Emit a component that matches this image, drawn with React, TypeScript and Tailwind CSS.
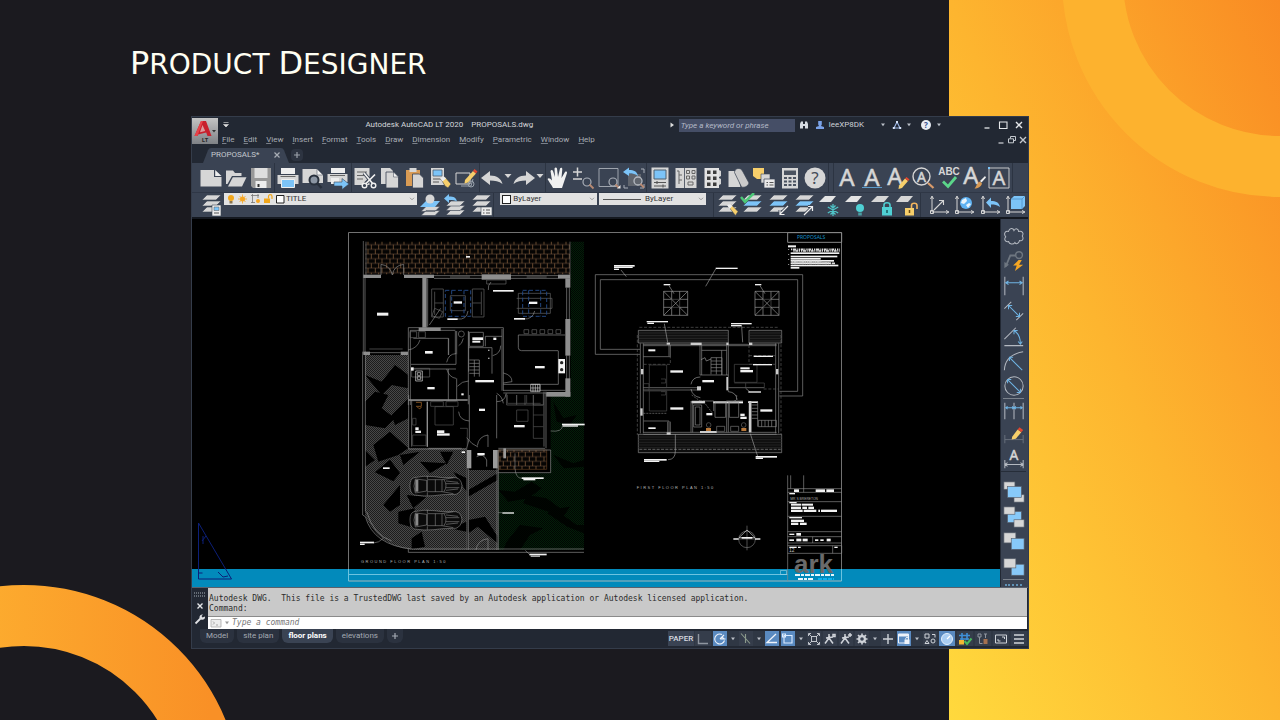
import React from "react";

type Box = [number, number, number, number];

const L = "#d6d6d6";
const B = "#7cc4f8";
const Y = "#f7cf6b";
const D = "#3a4353";

/* ---------- small helpers ---------- */

function Svg({ children, size = "size-6", box = "0 0 24 24" }: { children: React.ReactNode; size?: string; box?: string }) {
  return (
    <svg viewBox={box} className={`${size} shrink-0 overflow-visible`} fill="none" aria-hidden="true">
      {children}
    </svg>
  );
}

function Caret({ className = "text-[#b9bec6]" }: { className?: string }) {
  return (
    <svg viewBox="0 0 6 4" className={`h-1 w-1.5 shrink-0 ${className}`} aria-hidden="true">
      <path d="M1 .5h4L3 3.2z" fill="currentColor" />
    </svg>
  );
}

function Chevron() {
  return (
    <svg viewBox="0 0 6 4" className="mr-0.5 h-1 w-1.5 shrink-0" fill="none" aria-hidden="true">
      <path d="M1 .8l2 2 2-2" stroke="#888" strokeWidth=".8" />
    </svg>
  );
}

function Letter({ x = 12, y = 20, s = 24, children = "A" }: { x?: number; y?: number; s?: number; children?: string }) {
  return (
    <text x={x} y={y} fontSize={s} textAnchor="middle" fill={L} stroke={L} strokeWidth=".5" fontFamily="'Noto Sans', sans-serif">
      {children}
    </text>
  );
}

const Stack = ({ mid = L }: { mid?: string }) => (
  <>
    <path d="M8 14h14l-5 5H3z" fill={L} stroke={D} strokeWidth=".6" />
    <path d="M8 8h14l-5 5H3z" fill={mid} stroke={D} strokeWidth=".6" />
    <path d="M8 2h14l-5 5H3z" fill={L} stroke={D} strokeWidth=".6" />
  </>
);

const Axes = () => (
  <path d="M5 4v15h16M3.500 6L5 3l1.500 3M19 17.500l3 1.500-3 1.500M3.500 17.500h3v3h-3z" stroke={L} strokeWidth="1" />
);

const Pencil = () => (
  <>
    <path d="M13 19.500l6-7 3 2.500-6 7-3.500 1z" fill={Y} />
    <path d="M19 12.500l1.500-1.500 3 2.500L22 15z" fill="#e0472f" />
  </>
);

/* ---------- toolbar icons ---------- */

const icons: Record<string, React.ReactNode> = {
  New: (
    <>
      <path d="M1.500 4H15v7h7.500v9.500h-21z" fill={L} />
      <path d="M16.200 4l6.300 6h-6.300z" fill="#eee" />
    </>
  ),
  Open: (
    <>
      <path d="M2 4.500h7l2 2.500h6.500v3H8L3.500 18H2z" fill={L} />
      <path d="M8.800 11.200H22.500l-4.500 9.300H4z" fill={L} />
    </>
  ),
  Save: (
    <>
      <path d="M2 2h20v20H4l-2-2z" fill="#989898" />
      <path d="M5.500 2h13v10h-13z" fill="#dedede" />
      <path d="M6.500 15h11v7h-11z" fill="#ededed" />
      <path d="M8.500 18h2v3h-2z" fill="#333" />
    </>
  ),
  Print: (
    <>
      <path d="M5 2h14v6H5z" fill="#eee" />
      <path d="M1.500 9h21v9h-21z" fill={L} />
      <path d="M4.500 10.500h15" stroke="#666" />
      <path d="M5.500 13.500h13v8h-13z" fill={B} stroke="#eee" />
    </>
  ),
  "Print preview": (
    <>
      <path d="M1.500 3H16l6 6v8H1.500z" fill={L} />
      <path d="M16 3l6 6h-6z" fill="#f4f4f4" stroke={D} strokeWidth=".5" />
      <circle cx="13" cy="14" r="4.500" fill="#8b95a3" stroke="#28303c" strokeWidth="2" />
      <path d="M16 17l4.500 5" stroke="#28303c" strokeWidth="2.600" />
    </>
  ),
  Publish: (
    <>
      <path d="M5 2h14v5H5z" fill="#eee" />
      <path d="M1.500 8h20v8h-20z" fill={L} />
      <path d="M4 9.500h15" stroke="#666" />
      <path d="M5 12h8v6H5z" fill="#eee" />
      <path d="M8 16h8v-3.500l7 5.500-7 5.500V20H8z" fill={B} stroke={D} strokeWidth=".6" />
    </>
  ),
  Cut: (
    <>
      <path d="M1.500 2h15v17h-15z" fill={L} />
      <path d="M4 6h10M4 9.500h7M4 13h6" stroke="#666" strokeWidth="1.200" />
      <path d="M11 7l9 11M21 9l-9 9" stroke={D} strokeWidth="3.500" />
      <path d="M11 7l9 11M22 8.500l-10 10" stroke="#f0f0f0" strokeWidth="1.700" />
      <circle cx="11.500" cy="19.500" r="2.300" fill={D} stroke="#f0f0f0" strokeWidth="1.400" />
      <circle cx="20.500" cy="19.500" r="2.300" fill={D} stroke="#f0f0f0" strokeWidth="1.400" />
    </>
  ),
  Copy: (
    <>
      <path d="M3 2h9l3 3v13H3z" fill={L} />
      <path d="M8 6h7.500l5 5v11H8z" fill={L} stroke={D} strokeWidth=".8" />
      <path d="M15.500 6l5 5h-5z" fill="#f0f0f0" stroke={D} strokeWidth=".5" />
    </>
  ),
  Paste: (
    <>
      <path d="M3 4h14v16H3z" fill="#d99b54" />
      <path d="M6.500 2h7v4h-7z" fill={L} />
      <path d="M9.500 8h7l4 4v10h-11z" fill={L} stroke={D} strokeWidth=".8" />
    </>
  ),
  "Match properties": (
    <>
      <path d="M2 2h13v17H2z" fill={L} />
      <path d="M4 4h9v6H4z" fill={B} stroke="#51606f" strokeWidth=".8" />
      <path d="M4 13h8M4 16h6" stroke="#555" />
      <path d="M12 13l4-2 6 7-3 4-3-2z" fill={Y} stroke={D} strokeWidth=".6" />
      <path d="M11 12l4-1.500 2 2-3.500 3z" fill="#eee" />
    </>
  ),
  "Block editor": (
    <>
      <path d="M2 7h14v11H2z" stroke={L} />
      <path d="M7 20h10l2-7" stroke="#9aa3ad" />
      <circle cx="17" cy="18" r="3" stroke="#9aa3ad" />
      <path d="M11 14l8-9 3 2.500-8 9-3.500 1z" fill={Y} />
      <path d="M19 5l1.500-2 3 2.500L22 7.500z" fill="#e0472f" />
    </>
  ),
  Undo: <path d="M1 12l9-7v4.500c7 0 11 3 12.500 8.500C19 15 15 14.500 10 14.500V19z" fill={L} />,
  Redo: <path d="M23 12l-9-7v4.500C7 9.500 3 12.500 1.500 18 5 15 9 14.500 14 14.500V19z" fill={L} />,
  Pan: (
    <path
      d="M7 22c-2-4-4-6-5.500-9 1-1.500 2.500-1 4.500 1.500L4.500 5C5 3.500 6.500 3.500 7 5l2 6-.5-8.500c.5-1.500 2-1.500 2.500 0L12 11l2-8.500c.7-1.300 2.300-.9 2.300.5L15.500 12l3.500-6c1-1 2.300-.3 2 1L18 16l-2 6z"
      fill="#f1f1f1"
    />
  ),
  "Zoom realtime": (
    <>
      <path d="M2 6h9M6.500 1.500v9M2 13h9" stroke={L} strokeWidth="1.500" />
      <circle cx="16" cy="16" r="4" stroke="#a9afb8" strokeWidth="1.200" />
      <path d="M18.500 18.500l4 4" stroke="#b88972" strokeWidth="1.800" />
    </>
  ),
  "Zoom window": (
    <>
      <path d="M2 2.500h19v18H2z" stroke="#a9afb8" strokeWidth=".9" />
      <circle cx="16" cy="16" r="4" fill={D} stroke="#a9afb8" strokeWidth="1.200" />
      <path d="M18.500 18.500l3 3" stroke="#b88972" strokeWidth="1.800" />
      <path d="M20 22.500h3.500V19z" fill="#eee" />
    </>
  ),
  "Zoom previous": (
    <>
      <path d="M6 8h13v12H6z" fill="#60656d" />
      <path d="M2 19v3h4M19 3h3v4M22 18v4h-4" stroke="#a9afb8" />
      <path d="M1 6l6-4.500V4c5 0 8 1.500 9 6-2.500-2-5-2.500-9-2.500V10z" fill={B} />
      <circle cx="16" cy="15" r="4" stroke="#b5bac1" strokeWidth="1.300" />
      <path d="M18.500 18l3.500 3.500" stroke="#b88972" strokeWidth="1.800" />
    </>
  ),
  Properties: (
    <>
      <path d="M3.500 1.500h17v21h-17z" fill={L} />
      <path d="M6 4h12v9H6z" fill={B} stroke="#51606f" />
      <path d="M6 16.500h12M6 20h12M9 15v3M15 18.500v3" stroke="#555" strokeWidth="1.100" />
    </>
  ),
  DesignCenter: (
    <>
      <path d="M1.500 2h21v20h-21z" fill={L} />
      <path d="M10.500 2v20" stroke={D} strokeWidth=".8" />
      <path d="M3 5h2v13M5 9h3M5 14h3M12.500 4.500h3v3h-3zM18 4.500h3v3h-3zM12.500 10h3v3h-3zM18 10h3v3h-3zM14 16h5v3h-5z" stroke="#666" />
    </>
  ),
  "Tool palettes": (
    <>
      <path d="M4.500 2H19v20H4.500z" fill="#e3e3e3" />
      <path d="M19 4l2 1v5l-2 1zM19 12l2 1v5l-2 1z" fill={L} />
      <path d="M7 4.500h3.500V8H7zM13 4.500h3.500V8H13zM7 10.500h3.500V14H7zM13 10.500h3.500V14H13zM7 16.500h3.500V20H7zM13 16.500h3.500V20H13z" fill="#3c3c3c" />
    </>
  ),
  "Sheet set": (
    <>
      <path d="M2.500 5h8l4 16h-12z" fill={L} />
      <path d="M8.500 6.500c0-4.500 6-5.500 8-1.500l6.500 12c-1 3-4 5-7.500 4z" fill="#cbcbcb" stroke={D} strokeWidth=".7" />
    </>
  ),
  Markup: (
    <>
      <path d="M1 2h11v11H5l-4-3z" fill={Y} />
      <path d="M9 8h9v9H9z" fill={L} stroke={D} strokeWidth=".6" />
      <path d="M12 13h11v9H12z" fill="#e9e9e9" stroke={D} strokeWidth=".7" />
      <path d="M14.500 16.500h1.500M17.500 16.500h4M14.500 19h1.500M17.500 19h4" stroke="#555" />
    </>
  ),
  Calculator: (
    <>
      <path d="M4 2h16v20.500H4z" fill={L} />
      <path d="M6 4.500h12V9H6z" fill="#4a525f" />
      <path d="M6 12h3M10.500 12h3M15 12h3M6 15.500h3M10.500 15.500h3M15 15.500h3M6 19h3M10.500 19h3M15 19h3" stroke="#4a525f" strokeWidth="2" />
    </>
  ),
  Help: (
    <>
      <circle cx="12" cy="12" r="10.500" fill={L} />
      <text x="12" y="18" fontSize="17" textAnchor="middle" fill="#444c58" fontFamily="'Noto Sans', sans-serif">
        ?
      </text>
    </>
  ),
  "Multiline text": <Letter />,
  "Single line text": (
    <>
      <Letter />
      <path d="M2 21.500h20" stroke="#5c9bc9" />
    </>
  ),
  "Edit text": (
    <>
      <Letter x={9} y={19} />
      <Pencil />
    </>
  ),
  "Find text": (
    <>
      <circle cx="10.500" cy="10.500" r="8.500" stroke={L} strokeWidth="1.400" />
      <Letter x={10.5} y={15.5} s={14} />
      <path d="M17 17l5.500 5" stroke="#d99b6b" strokeWidth="2.200" />
    </>
  ),
  Spelling: (
    <>
      <text x="12" y="9" fontSize="10" fontWeight="700" textAnchor="middle" fill={L} fontFamily="'Liberation Sans', sans-serif">
        ABC
      </text>
      <path d="M6 15.500l5 5L19 11" stroke="#5bd68a" strokeWidth="2.800" />
    </>
  ),
  "Text style": (
    <>
      <Letter x={9} y={18} />
      <path d="M23 10l-5 5 1.500 1.500L24 11.500z" fill="#eee" />
      <path d="M18 15.500l2 2c-1 3.500-4 5-7.500 5 2-1.500 2-5.500 5.500-7z" fill="#d99b54" />
    </>
  ),
  "Text frame": (
    <>
      <path d="M2 2h20v20H2z" stroke={L} strokeWidth=".9" />
      <Letter y={19} s={20} />
      <path d="M1 1h2v2H1z" fill={B} />
    </>
  ),
  "Layer properties": (
    <>
      <Stack />
      <path d="M13 12h9v11h-9z" fill="#ececec" stroke={D} strokeWidth=".6" />
      <path d="M15 14h5v3.500h-5z" fill={B} stroke="#555" strokeWidth=".5" />
      <path d="M15 20h5" stroke="#555" />
    </>
  ),
  "Make current": (
    <>
      <path d="M8 17.500h14l-5 5H3zM8 13.500h14l-5 5H3z" fill={L} stroke={D} strokeWidth=".6" />
      <path d="M8 8h14l-5 6H2z" fill={B} />
      <circle cx="12" cy="6" r="4.500" fill={L} />
    </>
  ),
  "Layer previous": (
    <>
      <path d="M8 17h14l-5 5H3z" fill={L} stroke={D} strokeWidth=".6" />
      <path d="M8 12.500h14l-5 5H3z" fill={L} stroke={D} strokeWidth=".6" />
      <path d="M8 8h14l-5 5H3z" fill={L} stroke={D} strokeWidth=".6" />
      <path d="M1 5.500l5-4.500v2.500c5 0 7 1 8 5-2-1.500-4-1.500-8-1.500v3z" fill={B} />
    </>
  ),
  "Layer states": (
    <>
      <Stack />
      <path d="M12 14h11v8.500H12z" fill="#ececec" stroke={D} strokeWidth=".6" />
      <path d="M14 17h1.500M17 17h4M14 20h1.500M17 20h4" stroke="#555" />
    </>
  ),
  "Layer match": (
    <>
      <Stack />
      <path d="M13 13l3-1.500 7 7-2.500 4z" fill={Y} stroke={D} strokeWidth=".5" />
      <path d="M12 12l3.500-1 2 2-3 3z" fill="#eee" />
    </>
  ),
  "Change to current": (
    <>
      <Stack mid={B} />
      <path d="M1 4l4 5L14 0" stroke="#4cc877" strokeWidth="2.500" />
    </>
  ),
  "Copy to layer": (
    <>
      <Stack mid={B} />
      <path d="M22 13l-8 8M14 17v4.500h4.500" stroke={D} strokeWidth="3" />
      <path d="M22 13l-8 8M14 17v4.500h4.500" stroke="#eee" strokeWidth="1.200" />
    </>
  ),
  "Layer walk": (
    <>
      <Stack mid={B} />
      <path d="M12 22l8-8M16 13.500h4.500V18" stroke={D} strokeWidth="3" />
      <path d="M12 22l8-8M16 13.500h4.500V18" stroke="#eee" strokeWidth="1.200" />
    </>
  ),
  "Layer freeze": (
    <>
      <path d="M7 3h11l-5 6H1z" fill="#e4e4e4" />
      <path d="M15 11v12M9.800 14l10.400 6M9.800 20l10.400-6M12.500 12.500L15 15l2.500-2.500M12.500 21.500L15 19l2.500 2.500" stroke="#4fc3c7" strokeWidth="1.300" />
    </>
  ),
  "Layer off": (
    <>
      <path d="M7 3h11l-5 6H1z" fill="#e4e4e4" />
      <circle cx="16" cy="15" r="4" fill="#4fd0d4" />
      <path d="M14.200 19.500h3.600v3h-3.600z" fill="#4a9da3" />
    </>
  ),
  "Layer lock": (
    <>
      <path d="M7 3h12l-5 6H1z" fill={L} />
      <path d="M12 14h10v8.500H12z" fill="#4fd0d4" />
      <path d="M14 14v-2c0-3 6-3 6 0v2" stroke="#4fd0d4" strokeWidth="1.600" />
      <path d="M17 17v3" stroke="#175a5e" strokeWidth="1.500" />
    </>
  ),
  "Layer unlock": (
    <>
      <path d="M6 3h12l-5 6H1z" fill={L} />
      <path d="M10 15h9v7.500h-9z" fill={Y} />
      <path d="M16.500 15v-2.500c0-3 5.500-3 5.500 0V16" stroke="#f4b55e" strokeWidth="1.600" />
      <path d="M14.500 17v3" stroke="#6b4a12" strokeWidth="1.500" />
    </>
  ),
  "UCS origin": (
    <>
      <Axes />
      <path d="M7 17l9-9M12 7.500h4.500V12" stroke={L} strokeWidth="1.100" />
    </>
  ),
  "UCS world": (
    <>
      <Axes />
      <circle cx="14" cy="10" r="6" fill="#5fb2f2" />
      <path d="M10 7l4-2 1 3-3 3-3-1zM14 12l3-2 2 1-3 4z" fill="#e9f4fb" />
    </>
  ),
  "UCS previous": (
    <>
      <Axes />
      <path d="M8 9.500l5-5V8c5 0 8 1.500 9 6-3-2-5-2.500-9-2.500V15z" fill={B} />
    </>
  ),
  "UCS face": (
    <>
      <Axes />
      <path d="M8 6l3-3h11v10l-3 3H8z" fill={B} />
      <path d="M8 6h11v10M19 6l3-3" stroke="#4c8fc4" strokeWidth=".8" />
    </>
  ),
};

function ToolGroup({ names, divider = true }: { names: string[]; divider?: boolean }) {
  return (
    <div className={`flex min-w-0 items-center ${divider ? "border-r border-[#2c3442]" : ""}`}>
      {names.map((n) => (
        <button key={n} type="button" aria-label={n} className="flex min-w-0 flex-1 justify-center">
          <Svg>{icons[n]}</Svg>
        </button>
      ))}
    </div>
  );
}

/* ---------- title and menus ---------- */

const menus = ["File", "Edit", "View", "Insert", "Format", "Tools", "Draw", "Dimension", "Modify", "Parametric", "Window", "Help"];

function WindowButtons({ small = false }: { small?: boolean }) {
  const c = small ? "#c4c8ce" : "#e4e6e9";
  return (
    <div className={`flex shrink-0 items-center ${small ? "gap-px" : "gap-1.5"}`}>
      <button type="button" aria-label="Minimize">
        <Svg size="size-2.5" box="0 0 10 10">
          <path d="M2.500 8h5" stroke={c} strokeWidth="1.300" />
        </Svg>
      </button>
      <button type="button" aria-label="Restore">
        <Svg size="size-2.5" box="0 0 10 10">
          {small ? <path d="M3.500 3.500v-2h5v4h-2M1.500 3.800h5v4h-5z" stroke={c} /> : <path d="M1.500 2h7.500v6.500H1.500z" stroke={c} strokeWidth="1.100" />}
        </Svg>
      </button>
      <button type="button" aria-label="Close">
        <Svg size="size-2.5" box="0 0 10 10">
          <path d="M2 2l6 6M8 2l-6 6" stroke={c} strokeWidth="1.400" />
        </Svg>
      </button>
    </div>
  );
}

function TitleArea() {
  return (
    <div className="flex bg-[#222833]">
      <button
        type="button"
        aria-label="Application menu"
        className="my-px flex h-[26px] w-[26px] shrink-0 items-center justify-center bg-linear-to-b from-[#c4c4c4] to-[#7f8286]"
      >
        <Svg size="size-6">
          <path d="M1.500 17L8 2h5l5.500 15h-4l-1.300-3.500L5 15.500 4.500 17z" fill="#c8202c" />
          <path d="M9.500 6l2.700 6-5.200 1.200z" fill="#dc9a9c" />
          <path d="M1.500 17L8 2h2L5 15.500 4.500 17z" fill="#e8434a" />
          <path d="M19 11h4l-2 2.500z" fill="#333" />
          <text x="12" y="23" fontSize="6" fontWeight="700" textAnchor="middle" fill="#2a2a2a" fontFamily="'Noto Sans', sans-serif">
            LT
          </text>
        </Svg>
      </button>
      <div className="min-w-0 flex-1">
        <div className="flex h-4 items-center pr-1 pl-1">
          <button type="button" aria-label="Quick access">
            <Svg size="size-2" box="0 0 8 8">
              <path d="M1.500 1.500h5M1.500 3.500h5L4 6z" fill="#ddd" stroke="#ddd" strokeWidth=".6" />
            </Svg>
          </button>
          <h2 className="flex flex-1 justify-center gap-2 text-[8px] leading-4 whitespace-pre text-[#d3d6da]">
            <span>Autodesk AutoCAD LT 2020</span>
            <span>PROPOSALS.dwg</span>
          </h2>
          <span className="mr-1 text-white">
            <Svg size="size-1.5" box="0 0 6 6">
              <path d="M1.500.5v5L5 3z" fill="#ddd" />
            </Svg>
          </span>
          <input
            type="search"
            aria-label="Search help"
            placeholder="Type a keyword or phrase"
            className="h-[13px] w-[116px] bg-[#454e66] px-0.5 text-[8px] leading-3 text-white italic placeholder:text-[#b3b9c6]"
          />
          <button type="button" aria-label="Search" className="ml-1">
            <Svg size="size-2.5" box="0 0 10 10">
              <path d="M1 8.500V4l1-2.500h2V4h2V1.500h2L9 4v4.500H6V6H4v2.500z" fill="#d6dbe2" />
            </Svg>
          </button>
          <button type="button" className="ml-1.5 flex items-center gap-1 text-[8px] text-[#cdd1d7]">
            <Svg size="size-2.5" box="0 0 10 10">
              <path d="M3.200 1h3.600v3.500L6 6l3 1v2H1V7l3-1-.8-1.500z" fill="#7aa2e8" />
            </Svg>
            leeXP8DK
          </button>
          <button type="button" aria-label="Account" className="ml-4">
            <Caret />
          </button>
          <button type="button" aria-label="App store" className="ml-1.5 flex items-center gap-1">
            <Svg size="size-2.5" box="0 0 10 10">
              <path d="M5 2L2 8h6z" stroke="#9db7e6" strokeWidth="1.100" />
              <path d="M4 1h2v2H4zM.8 7h2v2h-2zM7.200 7h2v2h-2z" fill="#d6e2f8" />
            </Svg>
            <Caret />
          </button>
          <button type="button" aria-label="Help menu" className="ml-2 flex items-center gap-1">
            <Svg size="size-3" box="0 0 12 12">
              <circle cx="6" cy="6" r="5" fill="#e9edf5" />
              <text x="6" y="9" fontSize="8" fontWeight="700" textAnchor="middle" fill="#33508f" fontFamily="'Noto Sans', sans-serif">
                ?
              </text>
            </Svg>
            <Caret />
          </button>
          <div className="ml-10">
            <WindowButtons />
          </div>
        </div>
        <div className="flex h-3.5 items-center pl-1">
          <nav aria-label="Menu bar" className="flex flex-1 gap-[9px] text-[8px] leading-3 text-[#a9aeb6]">
            {menus.map((m) => (
              <button key={m} type="button">
                <span className="underline decoration-[#7a808a]">{m[0]}</span>
                {m.slice(1)}
              </button>
            ))}
          </nav>
          <WindowButtons small />
        </div>
      </div>
    </div>
  );
}

function FileTabs() {
  return (
    <div className="flex h-4 items-end bg-[#222833] pl-[11px] text-[8px] text-[#c3c8ce]">
      <div className="relative flex h-4 w-[86px] items-center justify-between pr-2 pl-2">
        <svg viewBox="0 0 86 15" preserveAspectRatio="none" className="absolute inset-0 size-full" aria-hidden="true">
          <path d="M0 15L5 3q1-2 3-2h70q2 0 3 2l5 12z" fill={D} />
        </svg>
        <span className="relative">PROPOSALS*</span>
        <button type="button" aria-label="Close drawing" className="relative">
          <Svg size="size-2" box="0 0 8 8">
            <path d="M1.500 1.500l5 5M6.500 1.500l-5 5" stroke="#a9aeb6" strokeWidth="1.200" />
          </Svg>
        </button>
      </div>
      <button type="button" aria-label="New drawing" className="mb-0.5 ml-0.5 rounded-sm bg-[#2d3441] px-0.5 py-0.5">
        <Svg size="size-2" box="0 0 8 8">
          <path d="M4 1v6M1 4h6" stroke="#9ba1aa" strokeWidth="1.200" />
        </Svg>
      </button>
    </div>
  );
}

/* ---------- ribbons ---------- */

function MainToolbar() {
  return (
    <div className="grid h-[29px] grid-cols-[77fr_77fr_128fr_66fr_102fr_182fr_5fr_179fr_15fr] bg-[#3a4353] pl-1.5" role="toolbar" aria-label="Standard">
      <ToolGroup names={["New", "Open", "Save"]} />
      <ToolGroup names={["Print", "Print preview", "Publish"]} />
      <ToolGroup names={["Cut", "Copy", "Paste", "Match properties", "Block editor"]} />
      <div className="flex items-center border-r border-[#2c3442]">
        {["Undo", "Redo"].map((n) => (
          <div key={n} className="flex flex-1 items-center">
            <button type="button" aria-label={n}>
              <Svg>{icons[n]}</Svg>
            </button>
            <button type="button" aria-label={`${n} list`} className="-mt-1">
              <Svg size="size-2" box="0 0 8 8">
                <path d="M.5 2h7L4 6z" fill={L} />
              </Svg>
            </button>
          </div>
        ))}
      </div>
      <ToolGroup names={["Pan", "Zoom realtime", "Zoom window", "Zoom previous"]} />
      <ToolGroup names={["Properties", "DesignCenter", "Tool palettes", "Sheet set", "Markup", "Calculator", "Help"]} />
      <span className="border-r border-[#2c3442]" />
      <ToolGroup names={["Multiline text", "Single line text", "Edit text", "Find text", "Spelling", "Text style", "Text frame"]} />
    </div>
  );
}

function LayerToolbar() {
  const pick = "h-3 min-w-0 flex-1 appearance-none bg-transparent text-[8px] leading-3 text-[#333]";
  const combo = "flex h-3 min-w-0 items-center self-start bg-[#e2e2e2]";
  return (
    <div
      className="grid h-[27px] grid-cols-[26fr_194fr_77fr_6fr_97fr_2fr_107fr_8fr_208fr_5fr_102fr] items-center overflow-hidden border-t border-b-2 border-t-[#2f3746] border-b-[#14181f] bg-[#3a4353] pl-1.5"
      role="toolbar"
      aria-label="Layers"
    >
      <ToolGroup names={["Layer properties"]} divider={false} />
      <div className={combo}>
        <svg viewBox="0 0 62 12" className="h-3 w-[62px] shrink-0" fill="none" aria-hidden="true">
          <circle cx="7" cy="5" r="3" fill="#f2a71b" />
          <path d="M5.500 8h3v2.500h-3z" fill="#8a7550" />
          <circle cx="18.500" cy="6" r="2.500" fill="#f5a623" />
          <path d="M18.500 1.500v9M14 6h9M15.500 3l6 6M21.500 3l-6 6" stroke="#f5a623" strokeWidth=".8" />
          <path d="M27 2.500h8M28.500 1v9M34 1v4M27 9.500h4" stroke="#777" strokeWidth=".8" />
          <circle cx="34" cy="8" r="2" fill="#f5a623" />
          <path d="M40 5.500h6V10h-6z" fill="#f2a71b" />
          <path d="M44.500 5.500V3.500c0-2.500 3.500-2.500 3.500 0V6" stroke="#f2a71b" strokeWidth="1.200" />
          <path d="M52.500 2.500h7.500v7.500h-7.500z" fill="#fff" stroke="#222" />
        </svg>
        <select aria-label="Layer" className={pick} defaultValue="TITLE">
          <option>TITLE</option>
        </select>
        <Chevron />
      </div>
      <ToolGroup names={["Make current", "Layer previous", "Layer states"]} />
      <span />
      <div className={combo}>
        <span className="mx-[2px] size-[9px] shrink-0 border border-[#222] bg-white" />
        <select aria-label="Colour" className={pick} defaultValue="ByLayer">
          <option>ByLayer</option>
        </select>
        <Chevron />
      </div>
      <span />
      <div className={combo}>
        <span className="mx-1 h-px w-[38px] shrink-0 bg-[#555]" />
        <select aria-label="Linetype" className={pick} defaultValue="ByLayer">
          <option>ByLayer</option>
        </select>
        <Chevron />
      </div>
      <span className="h-full border-r border-[#2c3442]" />
      <ToolGroup names={["Layer match", "Change to current", "Copy to layer", "Layer walk", "Layer freeze", "Layer off", "Layer lock", "Layer unlock"]} />
      <span />
      <ToolGroup names={["UCS origin", "UCS world", "UCS previous", "UCS face"]} divider={false} />
    </div>
  );
}

/* ---------- side toolbar ---------- */

const blue = { stroke: "#6fb4e4", strokeWidth: 1.1 };
const grey = { stroke: "#b4b9c1", strokeWidth: 1.1 };

const dimTools: [string, React.ReactNode][] = [
  ["Revision cloud", <path d="M6 18c-4 1-5-3-3-5-3-4 0-7 3-6 1-4 5-4 6-1 2-3 5-2 5 1 4-1 6 2 4 5 2 3 0 6-3 5-1 4-4 4-5 2-2 3-6 2-7-1z" {...grey} />],
  [
    "Quick leader",
    <>
      <path d="M3 18l5-12h6" stroke="#6e7680" strokeWidth="2" />
      <path d="M1.500 20v-7l5 3z" fill="#6e7680" />
      <circle cx="17.500" cy="5.500" r="3.700" stroke="#6e7680" strokeWidth="1.600" />
      <path d="M17 11l-6 6h4l-2 6 9-7h-4.500l3-5z" fill="#f5a623" />
    </>,
  ],
  [
    "Linear dimension",
    <>
      <path d="M2 2v20M22 2v20" {...grey} />
      <path d="M3 8.500h18M6 6.500l-3 2 3 2M18 6.500l3 2-3 2" {...blue} />
    </>,
  ],
  [
    "Aligned dimension",
    <>
      <path d="M1.500 9.500L9 2M14.500 22L22 14.500" {...grey} />
      <path d="M6 6l12 12M6 10V6h4M18 14v4h-4" {...blue} />
    </>,
  ],
  [
    "Angular dimension",
    <>
      <path d="M1.500 15.500L14 3M1.500 22.500h20.500" {...grey} />
      <path d="M12 6c5 3 7 8 7 15M12 10V6h4M16.500 18l2.500 3 2-3" {...blue} />
    </>,
  ],
  [
    "Radius dimension",
    <>
      <path d="M1.500 22C2 11 9 4 22 2" {...grey} />
      <path d="M7 8l14 14M7 12V8h4" {...blue} />
    </>,
  ],
  [
    "Diameter dimension",
    <>
      <circle cx="12" cy="12" r="10" {...grey} />
      <path d="M5 5l14 14M5 9V5h4M19 15v4h-4" {...blue} />
    </>,
  ],
];

const dimTools2: [string, React.ReactNode][] = [
  [
    "Continue dimension",
    <>
      <path d="M2 3v18M12 3v18M22 3v18" {...grey} />
      <path d="M3 8.500h18M5 7L3 8.500 5 10M10 7l2 1.500L10 10M14 7l-2 1.500 2 1.500M19 7l2 1.500-2 1.500" {...blue} />
    </>,
  ],
  [
    "Edit dimension",
    <>
      <path d="M2 12v9M22 12v9M2 17h20" stroke="#6b737e" />
      <path d="M10 14l6-8 4 3-6 7-4.500 1z" fill={Y} />
      <path d="M16 6l2-2.500 4 3L20 9z" fill="#e0472f" />
    </>,
  ],
  [
    "Dimension text",
    <>
      <Letter y={13} s={15} />
      <path d="M2 13v9M22 13v9M2 18h20M5 16l-3 2 3 2M19 16l3 2-3 2" {...grey} />
    </>,
  ],
];

const order = (back: Box[], front: Box, over: Box[] = []) => (
  <>
    {back.map(([x, y, w, h]) => (
      <rect key={`${x}${y}`} x={x} y={y} width={w} height={h} fill={L} stroke="#59616d" strokeWidth=".7" />
    ))}
    <rect x={front[0]} y={front[1]} width={front[2]} height={front[3]} fill="#87c9f9" stroke="#59616d" strokeWidth=".7" />
    {over.map(([x, y, w, h]) => (
      <rect key={`${x}${y}`} x={x} y={y} width={w} height={h} fill={L} stroke="#59616d" strokeWidth=".7" />
    ))}
  </>
);

const orderTools: [string, React.ReactNode][] = [
  ["Bring to front", order([[1, 1, 12, 8], [12, 15, 11, 8]], [5, 6, 15, 12])],
  ["Send to back", order([], [5, 6, 15, 12], [[1, 1, 12, 8], [12, 15, 11, 8]])],
  ["Bring above", order([[1, 2, 13, 11]], [9, 8, 14, 12])],
  ["Send under", order([], [9, 9, 14, 12], [[1, 3, 13, 10]])],
];

function SideTools({ items, height }: { items: [string, React.ReactNode][]; height: string }) {
  return (
    <>
      {items.map(([n, i]) => (
        <button key={n} type="button" aria-label={n} className={`flex shrink-0 items-center justify-center ${height}`}>
          <Svg size="size-[22px]">{i}</Svg>
        </button>
      ))}
    </>
  );
}

function SideToolbar() {
  return (
    <div className="relative w-7 shrink-0 border-l border-[#222833] bg-[#3a4353]">
      <div className="absolute inset-0 flex flex-col overflow-hidden pt-1 pr-0.5">
        <SideTools items={dimTools} height="h-[25px]" />
        <div className="mx-0.5 h-px shrink-0 bg-[#7b828c]" />
        <SideTools items={dimTools2} height="h-6" />
        <div className="mb-[7px] h-px shrink-0 bg-[#262d39]" />
        <SideTools items={orderTools} height="h-[25px]" />
        <div className="mx-0.5 h-px shrink-0 bg-[#7b828c]" />
        <div className="mx-1 mt-1 border-t-2 border-dotted border-[#5f92b6]" />
      </div>
    </div>
  );
}

/* ---------- drawing ---------- */

const Rects = ({ items, fill = "#f2f2f2" }: { items: Box[]; fill?: string }) => (
  <>
    {items.map(([x, y, w, h], i) => (
      <rect key={i} x={x} y={y} width={w} height={h} fill={fill} />
    ))}
  </>
);

const Skylight = ({ x, y }: { x: number; y: number }) => (
  <g transform={`translate(${x} ${y})`} stroke="#9a9a9a" strokeWidth="2">
    <path d="M0 0h72v72H0zM24 0v24M48 0v24M24 48v24M48 48v24M0 24h24M48 24h24M0 48h24M48 48h24M0 0l72 72M72 0L0 72" />
    <path d="M24 24h24v24H24z" stroke="#555" />
  </g>
);

const Car = ({ y }: { y: number }) => (
  <g transform={`translate(0 ${y})`} stroke="#a0a0a0" strokeWidth="1.500">
    <path d="M210 30q0-20 12-24 30-7 60-3l26 3 40 0q16 4 18 24-2 20-18 26l-40 1-26 3q-30 3-60-2-12-6-12-28z" fill="#0a0a0a" />
    <path d="M226 10l34 4v32l-34 6q-8-20 0-42zM262 12h44v36h-44zM306 12l34-6M306 48l34 6M312 12q12 18 0 36M318 16l36 4M318 44l36-4M318 24h40M318 36h40M286 12v36M262 0v10M262 50v10" />
    <path d="M226 12h9v36h-9z" fill="#8a8a8a" stroke="none" />
  </g>
);

function GroundFloor() {
  return (
    <>
      {/* site surfaces, measured from the lower half of the plan */}
      <g transform="translate(340 395) scale(.33333)">
        <path d="M75-120H205V160H380V465H215Q110 450 75 360Z" fill="url(#paving)" />
        <path d="M385 225h88v240h-88z" fill="url(#paving)" />
        <path
          d="M75-60l50 20 40-50 40 30v40l-50-10-30 30zM75 20l30-30 40 10-20 40 40 30-30 30-60-10zM155 60l50-50v60l-40 20zM100 150l50-40 55 50-30 20-60 20zM75 165l30 30-30 20zM105 232l45-38 30 40-20 25zM180 180l60-10-50 40zM130 330l50-60v60l-30 20zM175 350l50-10-15 55-35-10zM215 430l30-20 10 45-40 8zM240 200l80 5-50 30zM300 170l40 0-20 40zM200 300l60 5-40 35zM330 400l50-20v30zM340 230l40 20v40zM385 285l88-50v20l-88 50zM385 375l50-10 38 60v20l-60-50-28 20z"
          fill="#000"
        />
        <path d="M692-460h40v925H475V235h157V0h60z" fill="url(#grass)" />
        <path
          d="M475 285l50 5 50-30 30 20-40 30-60 10zM560 300l60 10 40 30 30-5-20 30-60-20-60-20zM640 340l70 50 22 0v25l-50-20-60-40zM500 440l40-50 70 10-40 20-30 45h-50zM640 20l30 50 40-10-20 30-40-10zM640 180l60 25 32-10v20l-60 5z"
          fill="#000"
          opacity=".8"
        />
        <path d="M475 165h145v58H475z" fill="url(#bricks)" stroke="#5e3c20" strokeWidth="2" />
        <Car y={242} />
        <Car y={344} />
        <g stroke="#8d8d8d" strokeWidth="2">
          <path d="M68-130v490l8 5Q100 450 215 462H732M76-130v480M205 472h527M205 462v10M80 350q20 70 75 88M381 220v245M385 220v245M471 165v300M475 165v300" />
          <path d="M475 165h157v68H475M206 0v162h176M215 15v140M262 20v135M265 160h100M388 0v130l-8 30M470 0v130M612-10v165M618-10v170M475 160h140" />
          <path d="M205 15h178M262 20v135" strokeWidth="4" />
          <path d="M285 35h55v55h-55zM272 20h38v14h-38zM318 20h36v14h-36zM360 100h22v52M218 70h10v20h-10zM218 120h40v32h-40zM530 45h34v34h-34zM580 0v130h30M580 30h30M580 60h30M580 95h30M502 0v25h100M530 0v25M560 0v25" stroke="#555" />
          <path d="M356 50q2 26 32 28M412 152q4-28 32-32v36M410 185q20-12 30 10v20M408 465q4-30 36-34v34M470 20q26 0 28-24M380 128q14 20 34 28" />
        </g>
        <path d="M228 22h16v12h-16M232 36q8 10 12 0" stroke="#b8722e" strokeWidth="2" />
        <Rects fill="#9a9a9a" items={[[380, 165, 14, 55], [459, 165, 14, 55], [490, 160, 8, 30]]} />
        <Rects
          items={[
            [226, 97, 10, 8], [226, 107, 17, 7], [291, 106, 22, 8], [291, 115, 38, 7], [417, 41, 18, 7], [522, 90, 32, 7],
            [412, 174, 22, 7], [365, 169, 10, 5], [129, 217, 20, 5], [60, 440, 42, 5], [60, 446, 14, 4], [568, 476, 52, 5], [572, 482, 28, 3],
            [545, 247, 66, 5], [550, 252, 36, 4], [666, 86, 68, 5], [668, 91, 46, 4], [487, 352, 35, 4],
          ]}
        />
        <path d="M100 444q16 0 30-14M545 250q-18 0-20-30V175M556 466l12 12M475 353h12M632 108q34 4 36-16" stroke="#aaa" strokeWidth="1.500" />
        <text x="63" y="504" fontSize="12" fill="#b5b5b5" letterSpacing="4.500" fontFamily="'Liberation Sans', sans-serif">
          GROUND FLOOR PLAN 1:50
        </text>
      </g>
      {/* house, upper half */}
      <g transform="translate(340 225) scale(.33333)">
        <path d="M75 50h615v98H75z" fill="url(#bricks)" />
        <path d="M70 48v340M78 50v100M690 50v100" stroke="#777" strokeWidth="2" />
        <path d="M378 93h12v5h-12z" fill="#eee" />
        <Rects
          fill="#8e8e8e"
          items={[
            [70, 149, 53, 10], [192, 149, 90, 10], [425, 148, 88, 16], [654, 149, 37, 12], [676, 160, 15, 28], [247, 158, 13, 150],
            [236, 308, 66, 10], [70, 380, 20, 10], [182, 380, 22, 10], [676, 282, 15, 110], [676, 460, 15, 55], [619, 501, 72, 14],
          ]}
        />
        <g stroke="#8d8d8d" strokeWidth="2">
          <path d="M75 158v225M282 152h144M282 160h144M513 152h142M513 160h142M123 150v-32q28 4 34 32 4-28 34-32v32M330 156h60M560 156h60" />
          <path d="M263 160v145M680 188v95M688 188v95M680 392v70M688 392v70M90 383h92M205 308v232M211 316v224M211 316h135M205 308h285v190M486 312v185M346 318v70M350 318v70M385 318v220" />
          <path d="M220 340h105v50M326 340v50M213 418h135M213 432h135M348 388v30M325 432v95M214 527h134M350 460v68M386 368h70M386 320v120M388 322h42v42h-42zM436 364v-30h50M456 368v78M490 496h186M490 478h165V377M619 514v-10H490" />
          <path d="M535 330h140M535 330v38q0 9 9 9h110M572 478h28v20M388 405h30v50M388 415h30M388 425h30M388 435h30M388 445h30M403 405v50" />
        </g>
        <g stroke="#666" strokeWidth="2">
          <path d="M275 192h35v84h-35zM284 200v70M284 234h26M397 192h35v84h-35zM424 200v70M397 234h26M284 250l24 10-10 20-22-8z" />
          <path d="M331 212h45v45h-45zM535 205h96v60h-96zM440 165h58v12h-58zM530 220h106v30H530M552 314h14v12h-14zM576 314h14v12h-14zM600 314h14v12h-14zM624 314h14v12h-14zM648 314h14v12h-14zM210 320h20v18h-20zM236 320h20v18h-20z" />
          <path d="M215 430h54v26h-54zM88 372h100M500 505v35h110v-35M530 510v30M555 510v30M580 510v30" />
        </g>
        <path d="M316 196h76v78h-76zM548 196h72v78h-72zM335 196v78M372 196v78M566 196v78M602 196v78" stroke="#21457f" strokeWidth="3" strokeDasharray="12 7" />
        <path d="M240 345q-8 26-36 30M320 412q6-26 28-26M320 432q8 26 28 28M458 392q24-6 24-30M490 444q26 6 26 26l-26 4M470 505q16 8 20 30M356 362q10-4 14-22M352 484q14-16 34-16M268 300l34-50M352 282q28 4 32-24M550 282q28 2 34-24M445 195q-2-14 8-24" stroke="#999" strokeWidth="1.800" />
        <circle cx="364" cy="327" r="9" stroke="#777" strokeWidth="2" />
        <path d="M227 438h20v30h-20zM232 443h10v8h-10zM232 455h10v8h-10z" stroke="#ddd" strokeWidth="2" />
        <path d="M655 402h20v43h-20z" fill="#f2f2f2" />
        <circle cx="665" cy="413" r="5" fill="#222" />
        <circle cx="665" cy="434" r="5" fill="#222" />
        <path d="M572 478h28v22h-28zM579 478v22M586 478v22M593 478v22M572 489h28" stroke="#ccc" strokeWidth="2" />
        <Rects
          items={[
            [111, 263, 34, 9], [341, 229, 25, 7], [567, 230, 25, 7], [322, 280, 31, 5], [522, 279, 33, 5], [459, 195, 62, 5], [255, 378, 23, 8],
            [397, 337, 32, 8], [397, 347, 24, 6], [460, 338, 9, 7], [406, 465, 56, 7], [262, 486, 22, 7], [364, 505, 7, 6], [585, 423, 29, 7],
            [213, 427, 8, 10], [445, 374, 3, 4], [445, 398, 3, 4],
          ]}
        />
      </g>
    </>
  );
}

function FirstFloor() {
  return (
    <>
      <g transform="translate(585 225) scale(.33333)">
        <g stroke="#8a8a8a" strokeWidth="2">
          <path d="M165 388H31V149h622v364h-70M165 373H46V164h592v335h-55" />
          <path d="M160 316h270v38H160zM492 316h98v38h-98z" fill="#101010" />
          <path d="M160 324h270M160 332h270M160 340h270M160 348h270M492 324h98M492 332h98M492 340h98M492 348h98" stroke="#333" />
          <path d="M166 355v270M175 355v270M572 355v270M581 355v270M175 358h400M175 362h400M345 360v90M350 360v90M425 360v90M430 360v140M350 376h75M345 450h85" />
          <path d="M252 360v34M256 360v34M175 395h82M378 398h33v52M378 398v50M378 408h33M378 418h33M378 428h33M378 438h33M394 398v50M410 376v74M175 488h170M175 495h170M430 488h108" />
        </g>
        <path d="M163 307h420M157 330v300M588 330v300M176 418h80v-24M492 360v55M492 418h80M492 392h80M536 492h46" stroke="#5d5d5d" strokeWidth="2" strokeDasharray="9 5" />
        <path d="M193 420h52v68h-52zM193 498h52v60h-52zM448 418h68v54h-68zM176 476h16v22h-16M228 462h14v12h-14M228 500h14v10h-14M448 474h90v14M482 474v14" stroke="#4d4d4d" strokeWidth="2" />
        <path d="M348 404l12-6 4 10 14-6M318 478q4-22 28-22M318 492q4 22 28 26M430 500q24 2 26 24M108 135l16 20M392 132l-30 52M252 182l15 24M525 182l15 24M238 296l10 56M470 304l3 48M482 490l12 10" stroke="#aaa" strokeWidth="1.800" />
        <Skylight x={236} y={199} />
        <Skylight x={510} y={199} />
        <Rects fill="#ccc" items={[[245, 353, 10, 6], [317, 353, 33, 7], [424, 353, 7, 7], [492, 353, 10, 7], [424, 456, 5, 40], [336, 484, 12, 12], [168, 432, 7, 16], [573, 432, 7, 16]]} />
        <Rects
          items={[
            [87, 120, 62, 5], [87, 125, 56, 4], [87, 131, 15, 4], [392, 128, 66, 4], [236, 177, 20, 4], [510, 177, 19, 4], [185, 288, 64, 4], [187, 293, 20, 4],
            [438, 294, 62, 4], [438, 300, 32, 4], [190, 373, 21, 6], [256, 436, 38, 7], [466, 427, 28, 6], [466, 435, 38, 7], [352, 465, 35, 7],
            [506, 392, 58, 4], [504, 417, 57, 4], [490, 499, 38, 4], [320, 529, 40, 6], [384, 529, 90, 6], [489, 529, 30, 5],
            [609, 61, 24, 6], [617, 82, 146, 5], [617, 92, 140, 5], [617, 99, 90, 5], [617, 105, 130, 5], [617, 112, 120, 5], [617, 119, 143, 5], [617, 126, 26, 5],
          ]}
        />
        <path d="M618 73h146M625 78h140M620 108h90M620 115h130" stroke="#ddd" strokeWidth="5" strokeDasharray="4 2 9 2 3 3" />
        <path d="M611 72v52" stroke="#aaa" strokeWidth="3" strokeDasharray="3 12" />
        <path d="M608 23h162v29H608z" stroke="#8a8a8a" strokeWidth="3" />
        <text x="636" y="43" fontSize="15" fill="#1791c8" fontFamily="'Noto Sans', sans-serif">
          PROPOSALS
        </text>
      </g>
      <g transform="translate(585 395) scale(.33333)">
        <g stroke="#8a8a8a" strokeWidth="2">
          <path d="M160 118h430v55H160z" fill="#0e0e0e" />
          <path d="M160 126h430M160 134h430M160 142h430M160 150h430M160 158h430" stroke="#2c2c2c" />
          <path d="M163 163h424" strokeDasharray="9 4" />
          <path d="M175 112h400M175 118h400M176 78h76v34M248 80v32M256 80v32M318 18v94M323 18v94M425 18v94M430 18v94M492 20v92M498 20v92M320 18h66v30M424 18h50M390 22h32v45h-32zM433 22h28v45h-28zM326 30h24v66h-24zM331 36h14v54h-14z" />
          <path d="M498 20h20v75M500 30h18M500 40h18M500 50h18M500 60h18M500 70h18M520 76h54v19h-54zM530 76v19M540 76v19M550 76v19M560 76v19" />
          <path d="M395 94h24v15h-24zM437 94h24v15h-24z" stroke="#777" />
        </g>
        <path d="M345 18h15v5M320 0l28 20M356 20l26 34M455 0v16l-22 6M175 55h70" stroke="#888" strokeWidth="1.800" strokeDasharray="6 3" />
        <path d="M271 118v50q0 26-22 26M496 116l22 68" stroke="#aaa" strokeWidth="1.800" />
        <circle cx="371" cy="90" r="7" stroke="#666" strokeWidth="2" />
        <circle cx="476" cy="90" r="7" stroke="#666" strokeWidth="2" />
        <Rects fill="#b8783a" items={[[363, 99, 15, 9], [469, 99, 15, 9]]} />
        <Rects fill="#ccc" items={[[492, 18, 7, 94], [320, 18, 40, 5], [245, 112, 12, 7], [345, 108, 50, 6], [166, 40, 7, 22]]} />
        <Rects
          items={[
            [256, 37, 39, 7], [526, 43, 36, 7], [466, 56, 13, 7], [466, 65, 19, 7], [364, 54, 18, 7], [190, 97, 22, 5], [177, 192, 68, 5], [177, 197, 46, 4],
            [512, 183, 64, 5], [512, 188, 22, 4],
          ]}
        />
        <text x="155" y="281" fontSize="12" fill="#b5b5b5" letterSpacing="4.500" fontFamily="'Liberation Sans', sans-serif">
          FIRST FLOOR PLAN 1:50
        </text>
        <g stroke="#777" strokeWidth="2">
          <circle cx="486" cy="433" r="25" />
          <path d="M486 392v74M446 432h80" />
          <path d="M462 428l24-23 24 23z" stroke="#ddd" />
        </g>
        <Rects items={[[445, 430, 16, 4], [470, 426, 32, 5], [510, 430, 16, 4]]} />
        {/* title block */}
        <g stroke="#8a8a8a" strokeWidth="2">
          <path d="M608 241v318M617 241v40M656 241v51M608 281h162M608 292h162M608 320h162M608 364h162M608 410h162M608 425h162M608 444h162M683 425v19M608 452h162v23H608M743 452v23" />
        </g>
        <Rects
          items={[
            [627, 283, 15, 8], [692, 283, 28, 8], [724, 283, 23, 8], [613, 294, 17, 4], [613, 321, 22, 4], [618, 326, 30, 6], [650, 326, 34, 6], [618, 335, 30, 7],
            [652, 335, 14, 7], [670, 335, 17, 7], [618, 344, 35, 7], [656, 344, 38, 7], [700, 344, 5, 7], [708, 344, 48, 7], [613, 366, 38, 4], [618, 374, 39, 7],
            [618, 383, 22, 7], [645, 383, 20, 7], [613, 416, 15, 4], [634, 414, 14, 8], [613, 433, 14, 5], [634, 431, 15, 8], [653, 431, 15, 8], [690, 433, 10, 5],
            [706, 433, 10, 5], [725, 431, 12, 8], [613, 455, 22, 4], [639, 455, 8, 4], [748, 455, 10, 4],
          ]}
        />
        <text x="616" y="314" fontSize="10" fill="#aaa" fontFamily="'Liberation Sans', sans-serif">
          MR S BRERETON
        </text>
        <text x="612" y="472" fontSize="15" fill="#bbb" fontFamily="'Liberation Sans', sans-serif">
          12
        </text>
      </g>
    </>
  );
}

function Canvas() {
  return (
    <svg viewBox="192 219 808 368" className="block h-auto min-w-0 flex-1 bg-black" fill="none" role="img" aria-label="Floor plans drawing">
      <defs>
        <pattern id="paving" width="6" height="6" patternUnits="userSpaceOnUse">
          <path d="M0 0h6v6H0z" fill="#1c1c1c" />
          <path d="M0 0h3v3H0zM3 3h3v3H3z" fill="#484848" />
        </pattern>
        <pattern id="grass" width="6" height="6" patternUnits="userSpaceOnUse">
          <path d="M0 0h6v6H0z" fill="#010602" />
          <path d="M0 0h3v3H0zM3 3h3v3H3z" fill="#031e09" />
        </pattern>
        <pattern id="bricks" width="66" height="28" patternUnits="userSpaceOnUse">
          <path d="M0 0h66v28H0z" fill="#050403" />
          <path d="M0 3h66M0 17h66" stroke="#5c4634" strokeWidth="2" />
          <path d="M8 3v14M28 3v14M50 3v14M18 17v11M40 17v11M60 17v11M18 0v3M40 0v3M60 0v3" stroke="#8f6440" strokeWidth="2" />
        </pattern>
      </defs>
      <path d="M192 569h808v18H192z" fill="#028abb" />
      <path d="M198.500 523v56h33zM202 541l4-5M203 536v8M202.500 573h-4v-5M218 572l5 5 5-1" stroke="#0c1f78" />
      <path d="M348.500 232.500h493v348.500h-493z" stroke="#727272" />
      <path d="M348.500 569v12h493v-12M348.500 574.500h439" stroke="#6cc3e0" />
      <GroundFloor />
      <FirstFloor />
      <text x="794" y="573" fontSize="26" fontWeight="700" fill="#6a6a6a" fontFamily="'Liberation Sans', sans-serif">
        ark
      </text>
      <path d="M795 575h40M798 579h16" stroke="#e8f6fb" strokeWidth="2" strokeDasharray="5 1 3 1" />
      <path d="M818 579h16" stroke="#12c0ff" strokeWidth="1.500" strokeDasharray="4 1" />
      <path d="M780.500 570.500h6v4h-6z" stroke="#9fd3e6" strokeWidth=".6" />
    </svg>
  );
}

/* ---------- command line and status bar ---------- */

function CommandLine() {
  return (
    <div className="flex border-t border-[#59616d] bg-[#222833]">
      <div className="flex w-4 shrink-0 flex-col items-center justify-between py-1">
        <Svg size="h-1.5 w-3" box="0 0 12 6">
          <path d="M0 1h12M0 4h12" stroke="#7b828c" strokeWidth="1.500" strokeDasharray="1 1" />
        </Svg>
        <button type="button" aria-label="Close command line" className="leading-none">
          <Svg size="size-2" box="0 0 8 8">
            <path d="M1.500 1.500l5 5M6.500 1.500l-5 5" stroke="#e4e6e9" strokeWidth="1.400" />
          </Svg>
        </button>
        <button type="button" aria-label="Customize" className="leading-none">
          <Svg size="size-3" box="0 0 12 12">
            <path d="M1.500 10.500l5-5" stroke="#e0e2e5" strokeWidth="1.800" />
            <path d="M9 1.500L7.500 3l1 1.500L11 3.500C11.500 6 9 7.500 7 6.500L5.500 5C5 3 7 1 9 1.500z" fill="#e0e2e5" />
          </Svg>
        </button>
      </div>
      <div className="mr-px min-w-0 flex-1 font-['DejaVu_Sans_Mono','Liberation_Mono',monospace] text-[8px]">
        <div className="bg-[#c9c9c9] px-px pt-1.5 pb-0.5 leading-[10px] whitespace-pre text-[#2c2c2c]">
          <p>{"Autodesk DWG.  This file is a TrustedDWG last saved by an Autodesk application or Autodesk licensed application."}</p>
          <p>Command:</p>
        </div>
        <div className="flex h-[13px] items-center gap-0.5 border-t border-[#8b8b8b] bg-white px-0.5">
          <Svg size="size-3" box="0 0 12 12">
            <path d="M1 2.500h10v7.500H1z" fill="#ececec" stroke="#aaa" strokeWidth=".8" />
            <path d="M3 4.500l1.500 1.500L3 7.500M6 8h2" stroke="#888" strokeWidth=".7" />
          </Svg>
          <Caret className="text-[#999]" />
          <input aria-label="Command" placeholder="Type a command" className="h-3 min-w-0 flex-1 leading-3 italic placeholder:text-[#777]" />
        </div>
      </div>
    </div>
  );
}

const S = "#cfd3d9";
type Status = { name: string; icon?: React.ReactNode; on?: boolean; wide?: boolean };

const status: Status[] = [
  { name: "Snap", wide: true, icon: <path d="M2.500 2v9.500H12" stroke="#8f96a0" strokeWidth="1.400" /> },
  { name: "Polar", on: true, icon: <path d="M7 7h5.500M7 7l4-4M11.500 8.500A5 5 0 1 1 9 2.500M9 5l2 2" stroke="#eef3fa" strokeWidth="1.100" /> },
  { name: "Polar settings" },
  { name: "Isodraft", icon: <path d="M2 1.500l9 10M6.500 2v9" stroke="#8b9a8c" strokeWidth="1.100" /> },
  { name: "Isodraft settings" },
  { name: "Tracking", on: true, icon: <path d="M11 2L2 10.500h10" stroke="#eef3fa" strokeWidth="1.300" /> },
  { name: "Object snap", on: true, icon: <path d="M3 3.500h8V11H3zM1.500 2h3v3h-3z" stroke="#dcecff" strokeWidth="1.100" fill="#5a8ac0" /> },
  { name: "Object snap settings" },
  { name: "Selection", icon: <path d="M2 2l3 3M12 2L9 5M2 12l3-3M12 12L9 9M4.500 4.500h5v5h-5zM1.500 4V1.500H4M10 1.500h2.500V4M12.500 10v2.500H10M4 12.500H1.500V10" stroke={S} strokeWidth=".9" /> },
  { name: "Annotation visibility", icon: <path d="M6 2v4L2 11.500M6 6l4 5.500M3 6l7-1M10 2.500h2v2h-2z" stroke={S} strokeWidth="1.500" /> },
  { name: "Auto scale", icon: <path d="M6 2v4L2 11.500M6 6l4 5.500M3 6l7-1M11 1v4M9 3h4" stroke={S} strokeWidth="1.500" /> },
  {
    name: "Workspace",
    icon: (
      <>
        <circle cx="7" cy="7" r="3" stroke={S} strokeWidth="2" />
        <path d="M7 1.500v11M1.500 7h11M3 3l8 8M11 3l-8 8" stroke={S} strokeWidth="1.600" />
        <circle cx="7" cy="7" r="1.800" fill={D} />
      </>
    ),
  },
  { name: "Workspace settings" },
  { name: "Annotation monitor", icon: <path d="M7 2v10M2 7h10" stroke={S} strokeWidth="1.400" /> },
  {
    name: "Lock UI",
    on: true,
    icon: (
      <>
        <path d="M1.500 2h10v9h-10z" stroke="#eef3fa" />
        <path d="M1.500 2h10v2.500h-10zM7.500 7.500h5V12h-5z" fill="#eef3fa" />
        <path d="M8.700 7.500V6.500c0-1.500 2.600-1.500 2.600 0v1" stroke="#eef3fa" />
      </>
    ),
  },
  { name: "Lock UI settings" },
  {
    name: "Isolate",
    icon: (
      <>
        <path d="M2 2h4v4H2zM2 11.500h4L4 8.500z" stroke={S} />
        <circle cx="10" cy="9" r="2" stroke={S} />
        <path d="M9 2.500h3v3" stroke={S} />
      </>
    ),
  },
  {
    name: "Performance",
    on: true,
    wide: true,
    icon: (
      <>
        <circle cx="7" cy="7" r="5.500" fill="#a9cdf2" stroke="#e5f0fb" />
        <path d="M7 7l3-3" stroke="#fff" strokeWidth="1.200" />
      </>
    ),
  },
  {
    name: "Trusted",
    wide: true,
    icon: (
      <>
        <path d="M4 1v9M9 1v7M1 3.500h11M2 7h9" stroke="#3f8fd6" strokeWidth="1.600" />
        <path d="M1 8h5v4.500H1z" fill="#f2b632" />
        <path d="M6.500 9l2.500 3 4.500-5.500" stroke="#48b85c" strokeWidth="2" />
      </>
    ),
  },
  {
    name: "Xref",
    wide: true,
    icon: (
      <>
        <path d="M2 2h3v3H2zM8 2h3M3.500 5v6.500h3M9.500 2v4" stroke="#8f96a0" />
        <path d="M7.500 7h4v5h-4z" fill="#a5704f" />
      </>
    ),
  },
  { name: "Clean screen", wide: true, icon: <path d="M1.500 3h11v8h-11zM8 5h2.500v2M4 7v2h2.500" stroke={S} /> },
  { name: "Customize", wide: true, icon: <path d="M2 3h10M2 7h10M2 11h10" stroke={S} strokeWidth="1.300" /> },
];

function StatusBar() {
  const tabs = ["Model", "site plan", "floor plans", "elevations"];
  return (
    <div className="flex h-[19px] items-center justify-between bg-[#222833] pl-2">
      <div className="flex gap-[3px] self-start text-[8px] leading-[14px] text-[#a4aab3]">
        {tabs.map((t) => (
          <button
            key={t}
            type="button"
            className={`rounded-b-md px-1.5 ${t === "floor plans" ? "bg-[#3a4353] font-bold text-white" : "bg-[#2b323f]"}`}
          >
            {t}
          </button>
        ))}
        <button type="button" aria-label="New layout" className="rounded-b-md bg-[#2b323f] px-1">
          <Svg size="size-2" box="0 0 8 8">
            <path d="M4 1v6M1 4h6" stroke="#a4aab3" strokeWidth="1.200" />
          </Svg>
        </button>
      </div>
      <div className="flex h-[15px] items-center bg-[#2f3744]">
        <button type="button" className="w-[26px] bg-[#3a4353] text-[8px] leading-[15px] font-medium text-[#d8dbe0]">
          PAPER
        </button>
        {status.map((s) =>
          s.icon ? (
            <button
              key={s.name}
              type="button"
              aria-label={s.name}
              className={`flex h-[15px] items-center justify-center border-x border-[#2f3744] ${s.wide ? "w-[18px]" : "w-4"} ${s.on ? "bg-[#5a8ac0]" : "bg-[#353d4b]"}`}
            >
              <Svg size="size-[14px]" box="0 0 14 14">
                {s.icon}
              </Svg>
            </button>
          ) : (
            <button key={s.name} type="button" aria-label={s.name} className="flex h-[15px] w-[10px] items-center justify-center">
              <Caret />
            </button>
          ),
        )}
      </div>
    </div>
  );
}

/* ---------- slide ---------- */

function Ring({ className, id, from, to }: { className: string; id: string; from: string; to: string }) {
  return (
    <svg viewBox="0 0 436 436" className={`absolute size-[436px] ${className}`} fill="none" aria-hidden="true">
      <defs>
        <linearGradient id={id} x1="0" y1="0" x2="1" y2="0">
          <stop offset="0" stopColor={from} />
          <stop offset="1" stopColor={to} />
        </linearGradient>
      </defs>
      <circle cx="218" cy="218" r="187.500" stroke={`url(#${id})`} strokeWidth="61" />
    </svg>
  );
}

export default function App() {
  return (
    <div className="relative min-h-screen overflow-hidden bg-[#1b1a1f] font-['Roboto',sans-serif]">
      <div className="absolute inset-y-0 right-0 w-[331px] bg-linear-to-tr from-[#ffd93d] via-[#fdb52f] to-[#f98b23]" />
      <Ring id="ring-top" className="-top-[239px] -right-[218px]" from="#fdb22e" to="#fdb22e" />
      <Ring id="ring-bottom" className="-bottom-[301px] -left-[194px]" from="#ffbe34" to="#f99026" />

      <main className="relative pt-[45px] pb-10">
        <h1 className="ml-[130px] font-['DejaVu_Sans',sans-serif] text-[28px] leading-9 text-[#fffff2]">
          <span className="text-[32px]">P</span>RODUCT <span className="text-[32px]">D</span>ESIGNER
        </h1>
        <section aria-label="AutoCAD" className="mt-[33px] mr-[251px] ml-[191px] border border-[#343c4a]">
          <TitleArea />
          <FileTabs />
          <MainToolbar />
          <LayerToolbar />
          <div className="flex">
            <Canvas />
            <SideToolbar />
          </div>
          <CommandLine />
          <StatusBar />
        </section>
      </main>
    </div>
  );
}
